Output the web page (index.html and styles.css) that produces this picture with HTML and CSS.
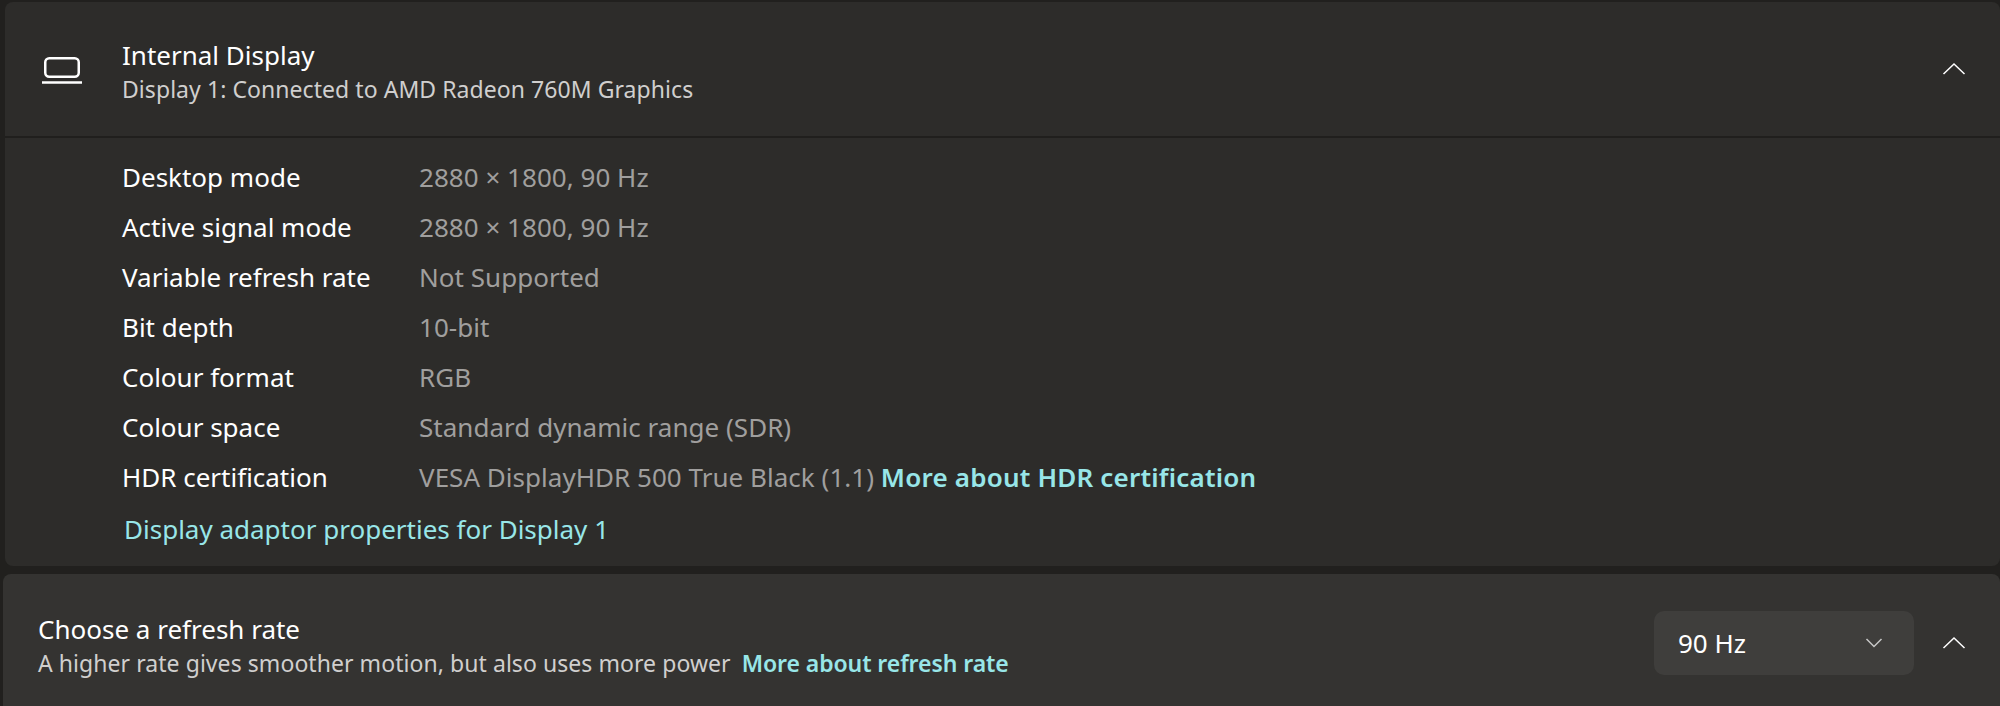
FILE: index.html
```html
<!DOCTYPE html>
<html lang="en">
<head>
<meta charset="utf-8">
<title>Display</title>
<link rel="stylesheet" href="styles.css">
</head>
<body>
<section class="card info">
  <header class="info-head">
    <svg class="laptop" width="40" height="28" viewBox="0 0 40 28" fill="none" stroke="#fff" stroke-width="2.5">
      <rect x="3.25" y="2.25" width="33.5" height="18.5" rx="4"/>
      <path d="M0 26.5H40"/>
    </svg>
    <div class="head-text">
      <div class="title">Internal Display</div>
      <div class="sub">Display 1: Connected to AMD Radeon 760M Graphics</div>
    </div>
    <svg class="chev" width="24" height="14" viewBox="0 0 24 14" fill="none" stroke="#fff" stroke-width="1.5"><path d="M1.5 12L12 2L22.5 12"/></svg>
  </header>
  <div class="details">
    <dl class="rows">
      <div class="row"><dt>Desktop mode</dt><dd>2880 × 1800, 90 Hz</dd></div>
      <div class="row"><dt>Active signal mode</dt><dd>2880 × 1800, 90 Hz</dd></div>
      <div class="row"><dt>Variable refresh rate</dt><dd>Not Supported</dd></div>
      <div class="row"><dt>Bit depth</dt><dd>10-bit</dd></div>
      <div class="row"><dt>Colour format</dt><dd>RGB</dd></div>
      <div class="row"><dt>Colour space</dt><dd>Standard dynamic range (SDR)</dd></div>
      <div class="row"><dt>HDR certification</dt><dd>VESA DisplayHDR 500 True Black (1.1) <a class="link strong">More about HDR certification</a></dd></div>
    </dl>
    <a class="link adaptor">Display adaptor properties for Display 1</a>
  </div>
</section>
<section class="card refresh">
  <div class="refresh-text">
    <div class="title">Choose a refresh rate</div>
    <div class="sub">A higher rate gives smoother motion, but also uses more power <a class="link strong small">More about refresh rate</a></div>
  </div>
  <div class="select">
    <span>90 Hz</span>
    <svg width="18" height="12" viewBox="0 0 18 12" fill="none" stroke="#c8c8c8" stroke-width="1.5"><path d="M1.5 2L9 9.5L16.5 2"/></svg>
  </div>
  <svg class="chev" width="24" height="14" viewBox="0 0 24 14" fill="none" stroke="#fff" stroke-width="1.5"><path d="M1.5 12L12 2L22.5 12"/></svg>
</section>
</body>
</html>
```
FILE: styles.css
```css
* { box-sizing: border-box; }
html, body { margin: 0; height: 706px; overflow: hidden; }
body {
  background: #21201e;
  padding-top: 2px;
  font-family: "Noto Sans", "Open Sans", sans-serif;
  color: #fff;
  display: flex;
  flex-direction: column;
}
.card { border-radius: 8px; }
.info { background: #2d2c2a; margin-left: 5px; height: 564px; flex: none; }
.info-head {
  height: 136px;
  border-bottom: 2px solid #201f1d;
  display: flex;
  align-items: center;
  padding: 0 34px 0 37px;
}
.laptop { flex: none; margin-right: 40px; margin-top: 2px; }
.head-text { flex: 1; padding-top: 6px; }
.title { font-size: 26px; line-height: 34px; }
.sub { font-size: 23px; line-height: 34px; color: #d0cfce; letter-spacing: 0.06px; }
.chev { flex: none; }
.details { padding: 14px 0 0 117px; }
.rows { margin: 0; }
.row { display: flex; height: 50px; align-items: center; font-size: 26px; }
.row dt { width: 297px; flex: none; }
.row dd { margin: 0; color: #a09f9e; letter-spacing: 0.03px; }
.link { color: #98e6e8; }
.strong { font-weight: 600; letter-spacing: 0.2px; }
.adaptor { display: block; margin: 2px 0 0 2px; font-size: 26px; line-height: 50px; }
.small { font-size: 23px; margin-left: 5px; letter-spacing: -0.08px; }
.refresh {
  background: #343331;
  margin: 8px 0 0 3px;
  flex: 1;
  display: flex;
  align-items: center;
  padding: 6px 34px 0 35px;
  border-radius: 8px 8px 0 0;
}
.refresh-text { flex: 1; padding-top: 6px; }
.select {
  width: 260px;
  height: 64px;
  flex: none;
  background: #3f3e3c;
  border-radius: 10px;
  display: flex;
  align-items: center;
  justify-content: space-between;
  padding: 0 31px 0 24px;
  font-size: 26px;
  margin-right: 28px;
}
```
